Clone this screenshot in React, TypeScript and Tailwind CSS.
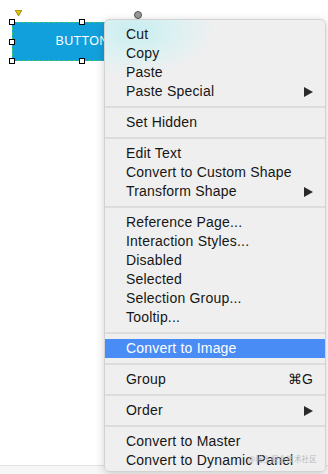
import React from "react";

type Item = {label: string; arrow?: boolean; shortcut?: string; active?: boolean};

const groups: Item[][] = [
  [{label: "Cut"}, {label: "Copy"}, {label: "Paste"}, {label: "Paste Special", arrow: true}],
  [{label: "Set Hidden"}],
  [{label: "Edit Text"}, {label: "Convert to Custom Shape"}, {label: "Transform Shape", arrow: true}],
  [
    {label: "Reference Page..."},
    {label: "Interaction Styles..."},
    {label: "Disabled"},
    {label: "Selected"},
    {label: "Selection Group..."},
    {label: "Tooltip..."},
  ],
  [{label: "Convert to Image", active: true}],
  [{label: "Group", shortcut: "⌘G"}],
  [{label: "Order", arrow: true}],
  [{label: "Convert to Master"}, {label: "Convert to Dynamic Panel"}],
];

function Handle({className}: {className: string}) {
  return <div className={`absolute w-[6px] h-[6px] bg-white border border-black ${className}`} />;
}

function MenuRow({item}: {item: Item}) {
  return (
    <div
      className={`flex h-[19px] items-center justify-between pl-[21px] pr-[12px] ${
        item.active ? "bg-[#4a8cf6] text-white" : "text-[#161616]"
      }`}
    >
      <span>{item.label}</span>
      {item.arrow && (
        <svg width="9" height="10" viewBox="0 0 9 10">
          <path d="M0 0 L9 5 L0 10 Z" fill="#2a2a2a" />
        </svg>
      )}
      {item.shortcut && <span>{item.shortcut}</span>}
    </div>
  );
}

export default function App() {
  return (
    <div
      className="relative w-[328px] h-[474px] bg-white overflow-hidden"
      style={{fontFamily: '"Liberation Sans", Arial, sans-serif'}}
    >
      {/* canvas floor */}
      <div className="absolute left-0 right-0 top-[465px] h-[9px] border-t border-[#e2e2e2] bg-[#f7f7f7]" />

      {/* selected widget with its handles */}
      <div className="absolute left-[12px] top-[22px] w-[140px] h-[39px]">
        <div className="w-full h-full bg-[#12a0dc] border border-dashed border-[#3ec66a] flex items-center justify-center">
          <span className="text-white text-[12.5px] tracking-[0.3px]">BUTTON</span>
        </div>
        <Handle className="-left-[3px] -top-[3px]" />
        <Handle className="left-[67px] -top-[3px]" />
        <Handle className="left-[137px] -top-[3px]" />
        <Handle className="-left-[3px] top-[17px]" />
        <Handle className="-left-[3px] top-[36px]" />
        <Handle className="left-[67px] top-[36px]" />
        <Handle className="left-[137px] top-[36px]" />
        <svg className="absolute left-[3px] -top-[12px]" width="7" height="6" viewBox="0 0 7 6">
          <path d="M0 0 L7 0 L3.5 6 Z" fill="#e2c100" stroke="#6b5a00" strokeWidth="0.6" />
        </svg>
        <div className="absolute left-[122px] -top-[11px] w-[8px] h-[8px] rounded-full bg-[#9a9a9a] border border-[#555]" />
      </div>

      {/* context menu */}
      <div className="absolute left-[104px] top-[19px] w-[222px] h-[453px] rounded-[5px] border border-[#d2d2d2] bg-[radial-gradient(ellipse_80px_45px_at_30px_10px,#c8edf0_0%,#dcf1f2_50%,#efefef_100%)] shadow-[0_2px_10px_rgba(0,0,0,0.18)] overflow-hidden pt-[5px] text-[14px] tracking-[0.2px]">
        {groups.map((g, gi) => (
          <div key={gi}>
            {gi > 0 && (
              <div className="h-[12px] flex items-center">
                <div className="w-full h-[2px] bg-[#dcdcdc]" />
              </div>
            )}
            {g.map((it) => (
              <MenuRow key={it.label} item={it} />
            ))}
          </div>
        ))}
        <div
          className="absolute right-[8px] bottom-[9px] text-[7.5px] leading-none text-[#b8b8b8]"
          style={{fontFamily: '"Noto Sans CJK SC", sans-serif'}}
        >
          @稀土掘金技术社区
        </div>
      </div>
    </div>
  );
}
